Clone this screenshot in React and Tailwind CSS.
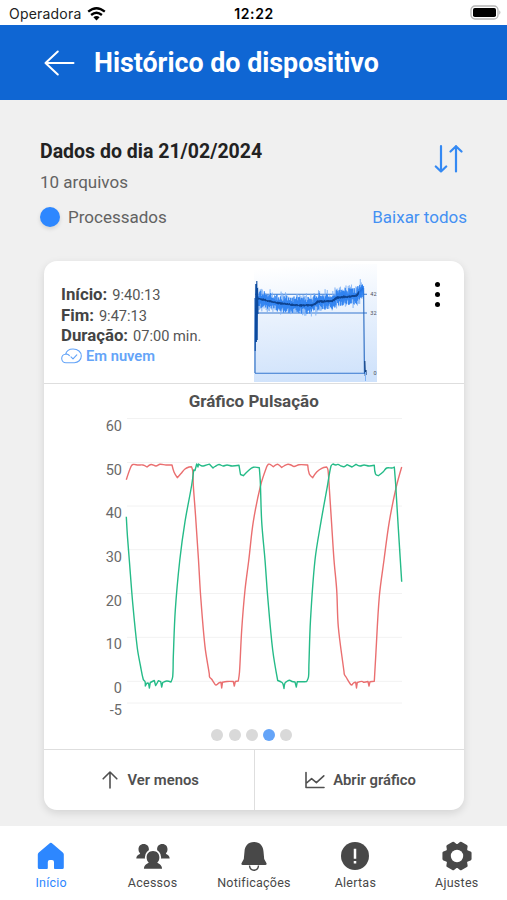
import React from "react";

const RED = "126.3 479.7 131 466.5 133 464.5 138 465 143 465 147 467 151 464.5 156 466 160 464.2 166 465 172 465 174 472 177.3 477.7 181 473.5 185 469 189 467 191.5 466.7 192.8 471 193.3 485 195.5 515 198.5 560 200.7 596.7 205 646.7 209.3 674 209.6 677 211.5 679 215 684.3 216 685 217.5 684.2 219 682.8 221 682.3 221.7 688 222.5 682.3 227 681.5 233.3 681.5 234.3 686 235.3 681.5 238.3 681 239.5 672 241.7 630 245 590 248.8 560 253.3 521.7 260.7 485 266.7 466.7 268.3 464.3 270 464.3 273.3 466.7 277 464.3 279 465 281.7 467.5 284 466 288 464.2 291 465 294 466.5 299 464.7 307.7 465 309.3 474 312.7 477.7 316.7 472 321.7 468.3 326.7 467 328 470 329.3 488 331.7 525 334 560 336.7 590 338.3 626.7 344 671.7 344.4 674.5 346 677 350.7 684.5 352 685 353.5 683 355.7 682.3 356.5 688 357.3 682.5 362 681.4 364 682.3 368 681.5 369 686 370 681.7 374.3 681.3 375.7 656.7 379.3 596.7 384 560 389.3 521.7 396 488 401.7 467";
const GREEN = "126.3 516.7 127.5 537 129.3 560 132.7 603 137.3 648 140.5 666 143.3 679.5 145 681.5 145.3 686 147 683 148.5 683.2 149.4 688 150.3 682.5 154.3 680.5 155.6 685.5 156.6 684 158.3 680.7 160.7 681.7 161.7 687 162.7 682.5 166.7 681 171 682 172.7 676.7 173.3 656.7 175.3 610 179.8 560 185 521.7 191.7 485 193.7 470 195 470.5 196.7 464 198 467 198.5 464 202 466 205 465.5 209.5 464.2 213 468 215 466.5 219 464.5 223 466 227 465 232 466 239 465.3 240.5 474.5 243.3 475.7 248.3 470.7 253.3 467.3 259.3 467.7 260.3 481.7 261.7 521.7 265 560 267.7 596.7 272.7 650 277.7 680.5 282 682.5 283 684 284 688.5 285 683 287.5 681 289.5 680.2 292 681.5 295 682 296.3 687 297.3 681.7 303 681.7 306.7 681.5 308.5 677 308.9 665 310.5 620 315 560 321 521.7 327.3 486.7 331 466 333 464 336 465 338 464.4 341 466 344 466.7 347 464.7 352 467 356 464.3 360 466 364 465 369 466 374.3 465.3 375.5 474 378.3 475.7 383.3 471.7 386.7 468 392 468 394.3 467 395.7 485 398.3 528 401.7 581.7";

/* Joins the points with cubic curves; a sharp turn keeps its corner. */
function curve(text) {
  const n = text.split(" ").map(Number);
  const p = [];
  for (let i = 0; i < n.length; i += 2) p.push([n[i], n[i + 1]]);
  const len = (a, b) => Math.hypot(b[0] - a[0], b[1] - a[1]);
  const tangent = p.map((c, i) => {
    if (i === 0 || i === p.length - 1) return [0, 0];
    const a = p[i - 1];
    const b = p[i + 1];
    const cos = ((c[0] - a[0]) * (b[0] - c[0]) + (c[1] - a[1]) * (b[1] - c[1])) / (len(a, c) * len(c, b));
    if (cos < 0.6) return [0, 0];
    const l = len(a, b);
    return [(b[0] - a[0]) / l, (b[1] - a[1]) / l];
  });
  let d = `M${p[0][0]} ${p[0][1]}`;
  for (let i = 1; i < p.length; i++) {
    const a = p[i - 1];
    const b = p[i];
    const k = len(a, b) / 3;
    const s = tangent[i - 1];
    const e = tangent[i];
    d += `C${(a[0] + s[0] * k).toFixed(2)} ${(a[1] + s[1] * k).toFixed(2)} ${(b[0] - e[0] * k).toFixed(2)} ${(b[1] - e[1] * k).toFixed(2)} ${b[0]} ${b[1]}`;
  }
  return d;
}

const TICKS = [
  ["60", 418.5], ["50", 462.5], ["40", 506], ["30", 549.7],
  ["20", 593.5], ["10", 637.3], ["0", 681.3], ["-5", 703],
];

function PulseChart() {
  return (
    <svg className="block h-[304px] w-[310px]" viewBox="100 414 310 304" fill="none">
      {TICKS.map(([label, y]) => (
        <g key={label}>
          <path d={`M127 ${y}H402`} stroke="#f2f2f2" strokeWidth="1" />
          <text x="122" y={y + 12} textAnchor="end" fill="#6a6a6a" fontSize="14.5" fontFamily="Roboto, sans-serif">{label}</text>
        </g>
      ))}
      <path d={curve(RED)} stroke="#ea6f70" strokeWidth="1.4" strokeLinejoin="round" />
      <path d={curve(GREEN)} stroke="#25bb88" strokeWidth="1.4" strokeLinejoin="round" />
    </svg>
  );
}

/* Average pressure level along the thumbnail, in its own pixels. */
const LEVELS = [[2, 33.5], [6, 35], [26, 39.5], [46, 41.5], [59, 41], [64, 37.5], [78, 37], [83, 33.5], [102, 32], [106, 27], [112, 22]];
function level(x) {
  for (let i = 1; i < LEVELS.length; i++) {
    const [x0, y0] = LEVELS[i - 1];
    const [x1, y1] = LEVELS[i];
    if (x <= x1) return y0 + ((x - x0) / (x1 - x0)) * (y1 - y0);
  }
  return 22;
}
function noise(i) {
  const v = Math.sin(i * 127.1 + 11.7) * 43758.5453;
  return v - Math.floor(v);
}
function band(step, amp, seed) {
  let d = "";
  let i = seed;
  for (let x = 4; x < 109; x += step) {
    i += 2;
    const up = level(x) - amp * (0.3 + noise(i) * 0.8);
    const down = level(x) + amp * (0.3 + noise(i + 1) * 0.8);
    d += `${d ? "L" : "M"}${x.toFixed(1)} ${up.toFixed(1)}L${(x + step / 2).toFixed(1)} ${down.toFixed(1)}`;
  }
  return d;
}

function Thumbnail() {
  return (
    <svg className="block h-[118px] w-[123px]" viewBox="0 0 123 118" fill="none">
      <defs>
        <linearGradient id="sky" x1="0.4" y1="0" x2="0.5" y2="1">
          <stop offset="0" stopColor="#ffffff" />
          <stop offset="0.45" stopColor="#e8f1fd" />
          <stop offset="1" stopColor="#cfe2fb" />
        </linearGradient>
      </defs>
      <rect width="123" height="118" fill="url(#sky)" />
      <path d="M1 30.3H113M1 49H113M1 109.2H112" stroke="#3577cf" strokeWidth="1.1" />
      <path d={band(1.1, 11, 5)} stroke="#7fb2f5" strokeWidth="0.6" />
      <path d={band(0.9, 8, 301)} stroke="#2a7ff0" strokeWidth="0.75" />
      <path d={band(0.9, 1.2, 700)} stroke="#0e438f" strokeWidth="1" />
      <path d="M1 109V34M109.6 24L110.4 109" stroke="#2467c0" strokeWidth="1.1" />
      <path d="M1.2 87L1.8 20L2.4 78L2.8 17L3.2 76L3.5 24L4 50" stroke="#0c4a9e" strokeWidth="1.1" />
      <path d="M105 35L106 24L107 33L108 21L109 33L109.6 22" stroke="#2a7ff0" strokeWidth="0.9" />
      <path d="M110.8 97L111.3 112L112 106V111" stroke="#123f7e" strokeWidth="1.2" />
      <path d="M111.5 108V117" stroke="#7fb2f5" strokeWidth="1" />
      <g fill="#4b4f58" fontSize="5.5" fontFamily="Roboto, sans-serif" textAnchor="end">
        <text x="122.5" y="32.3">42</text>
        <text x="122.5" y="51">32</text>
        <text x="122.5" y="111.2">0</text>
      </g>
    </svg>
  );
}

function StatusBar() {
  return (
    <div className="flex h-[25px] items-center bg-white px-[9px] font-['Inter',sans-serif] text-[14px] text-[#222]">
      <div className="flex flex-1 items-center gap-[6px] pt-[2px]">
        <span className="tracking-[0.2px]">Operadora</span>
        <svg className="h-[14px] w-[19px]" viewBox="0 0 19 14" fill="none" stroke="#000" strokeWidth="2.3">
          <path d="M1.2 4.7Q9.5 -2.3 17.8 4.7" />
          <path d="M4.1 8Q9.5 3.4 14.9 8" />
          <path d="M9.5 13.4L6.4 10.2Q9.5 7.8 12.6 10.2Z" fill="#000" stroke="none" />
        </svg>
      </div>
      <span className="pl-[1px] pt-[2px] font-semibold tracking-[0.6px] text-black">12:22</span>
      <div className="flex flex-1 justify-end">
        <svg className="mr-[-4px] h-[15px] w-[32px]" viewBox="0 0 32 15">
          <rect x="1" y="1" width="27" height="13" rx="4" fill="#fff" stroke="#b5b5b5" strokeWidth="1.3" />
          <rect x="3" y="3" width="23" height="9" rx="1.8" fill="#000" />
          <path d="M29.4 5.3Q31.4 7.5 29.4 9.7Z" fill="#aaa" />
        </svg>
      </div>
    </div>
  );
}

function Header() {
  return (
    <header className="flex h-[75px] items-center bg-[#0f66d3] pl-[44px] text-white">
      <svg className="h-[26px] w-[31px]" viewBox="0 0 31 26" fill="none" stroke="#fff" strokeWidth="2" strokeLinecap="round" strokeLinejoin="round">
        <path d="M29.5 13H1.5M13.8 1.5L1.5 13L13.8 24.5" />
      </svg>
      <h1 className="ml-[19px] whitespace-nowrap pt-[2px] text-[26.8px] font-bold leading-none">Histórico do dispositivo</h1>
    </header>
  );
}

function Detail({ label, value }) {
  return (
    <p className="flex h-[20.4px] items-baseline gap-[5px] whitespace-nowrap text-[14.6px] leading-[20.4px] text-[#555]">
      <b className="text-[16.8px] font-bold text-[#444]">{label}</b>
      <span>{value}</span>
    </p>
  );
}

function FileCard() {
  return (
    <section className="mt-[34px] ml-[3.5px] flex h-[549px] w-[420.5px] flex-col overflow-hidden rounded-[13px] bg-white shadow-[0_3px_8px_rgba(0,0,0,0.12)]">
      <div className="flex h-[122.5px] shrink-0 border-b-[1.5px] border-[#dedede]">
        <div className="w-[210px] pl-[17.5px] pt-[23.2px]">
          <Detail label="Início:" value="9:40:13" />
          <Detail label="Fim:" value="9:47:13" />
          <Detail label="Duração:" value="07:00 min." />
          <p className="flex h-[21px] items-center gap-[4px] pt-[1px] text-[14.7px] font-semibold text-[#64a4f8]">
            <svg className="h-[16px] w-[21px]" viewBox="0 0 21 16" fill="none" stroke="#64a4f8" strokeWidth="1.1" strokeLinecap="round" strokeLinejoin="round">
              <path d="M5 14.7C2.6 14.7 .7 12.9 .7 10.5C.7 8.2 2.4 6.4 4.6 6.2C5.4 3 8.3 1 12 1C17 1 20.3 4 20.3 7.9C20.3 11.8 17.2 14.7 13.3 14.7ZM4.6 6.2C6 5.9 7.6 6.5 8.4 7.6" />
              <path d="M10 8.8L12 10.8L15.8 6.8" />
            </svg>
            Em nuvem
          </p>
        </div>
        <div className="pt-[3px]"><Thumbnail /></div>
        <div className="ml-[58px] mt-[21px] flex h-[25px] flex-col justify-between">
          <i className="size-[5px] rounded-full bg-black" />
          <i className="size-[5px] rounded-full bg-black" />
          <i className="size-[5px] rounded-full bg-black" />
        </div>
      </div>
      <div className="flex h-[365.5px] shrink-0 flex-col">
        <h3 className="mb-[2px] mt-[6px] h-[22px] text-center text-[17px] font-bold leading-[22px] text-[#505050]">Gráfico Pulsação</h3>
        <div className="ml-[56.5px]"><PulseChart /></div>
        <div className="mt-[11.5px] flex justify-center gap-[5.2px] pr-[4px]">
          <i className="size-[12px] rounded-full bg-[#d9d9d9]" />
          <i className="size-[12px] rounded-full bg-[#d9d9d9]" />
          <i className="size-[12px] rounded-full bg-[#d9d9d9]" />
          <i className="size-[12px] rounded-full bg-[#64a4f8]" />
          <i className="size-[12px] rounded-full bg-[#d9d9d9]" />
        </div>
      </div>
      <div className="flex min-h-0 flex-1 border-t-[1.5px] border-[#dedede] text-[14.8px] font-semibold text-[#505050]">
        <button className="flex w-[211.5px] items-center justify-center gap-[10px] border-r-[1.5px] border-[#dedede] pl-[3px]">
          <svg className="h-[18px] w-[16px]" viewBox="0 0 16 18" fill="none" stroke="#505050" strokeWidth="1.6" strokeLinecap="round" strokeLinejoin="round">
            <path d="M8 17V1M1.2 7.8L8 1L14.8 7.8" />
          </svg>
          Ver menos
        </button>
        <button className="flex flex-1 items-center justify-center gap-[8px] pl-[2px]">
          <svg className="h-[18px] w-[20px]" viewBox="0 0 20 18" fill="none" stroke="#505050" strokeWidth="1.6" strokeLinecap="round" strokeLinejoin="round">
            <path d="M1 1.5V16.5H19M1 12.5L6.6 7.7L11.4 11.6L18.8 4.8" />
          </svg>
          Abrir gráfico
        </button>
      </div>
    </section>
  );
}

function Person({ x, y, s }) {
  return (
    <g transform={`translate(${x} ${y}) scale(${s})`}>
      <path d="M0 0C4 0 6.2 2.8 6.2 6.3C6.2 8.6 5.4 10 4.2 11.2C4.6 12.5 8.6 12.6 8.8 17.2H-8.8C-8.6 12.6 -4.6 12.5 -4.2 11.2C-5.4 10 -6.2 8.6 -6.2 6.3C-6.2 2.8 -4 0 0 0Z" />
    </g>
  );
}

/* Six rounded lobes with a notch between each pair. */
function gear() {
  const at = (deg, r) => {
    const a = (deg * Math.PI) / 180;
    return `${(16.5 + r * Math.cos(a)).toFixed(2)} ${(14 + r * Math.sin(a)).toFixed(2)}`;
  };
  const pts = [];
  for (let a = 0; a < 360; a += 60) {
    pts.push(at(a - 13, 13.4), at(a + 13, 13.4), at(a + 24, 10.6), at(a + 36, 10.6));
  }
  return `M${pts.join("L")}Z`;
}

const NAV = [
  ["Início", (
    <path d="M15.5 1Q16.3 .3 17.2 1L28.3 10.5Q29.3 11.4 29.3 12.6V25.5Q29.3 27 27.8 27H20.3Q19.5 27 19.5 26V20Q19.5 18 17.5 18H15.3Q13.3 18 13.3 20V26Q13.3 27 12.5 27H4.8Q3.3 27 3.3 25.5V12.6Q3.3 11.4 4.3 10.5Z" />
  )],
  ["Acessos", (
    <>
      <Person x={7.2} y={2} s={0.84} />
      <Person x={25.8} y={2} s={0.84} />
      <g stroke="#fff" strokeWidth="3.4"><Person x={16.5} y={9} s={1.03} /></g>
      <Person x={16.5} y={9} s={1.03} />
    </>
  )],
  ["Notificações", (
    <>
      <path d="M16.5 0C22.6 0 25.7 4.2 26 9.5L26.7 17L29 21.3Q29.4 22.9 27.8 22.9H5.2Q3.6 22.9 4 21.3L6.3 17L7 9.5C7.3 4.2 10.4 0 16.5 0Z" />
      <path d="M12 23.5C12.5 29.8 20.5 29.8 21 23.5" fill="none" stroke="#484848" strokeWidth="1.4" />
    </>
  )],
  ["Alertas", (
    <>
      <circle cx="16.5" cy="14" r="14" />
      <path d="M16.5 6.8V16.8M16.5 19V21.4" stroke="#fff" strokeWidth="2.5" />
    </>
  )],
  ["Ajustes", (
    <>
      <path d={gear()} stroke="#484848" strokeWidth="3" strokeLinejoin="round" />
      <circle cx="16.5" cy="14" r="6.2" fill="#fff" />
    </>
  )],
];

function BottomNav() {
  return (
    <nav className="grid h-[74px] grid-cols-5 bg-white">
      {NAV.map(([label, icon], i) => (
        <div key={label} className={`flex flex-col items-center pl-[1px] pt-[16px] ${i === 0 ? "text-[#2d87ff]" : "text-[#484848]"}`}>
          <svg className="h-[30px] w-[34px] overflow-visible" viewBox="-0.5 0 34 30" fill="currentColor">{icon}</svg>
          <span className="mt-[2px] text-[12.5px] leading-[18px] tracking-[0.25px]">{label}</span>
        </div>
      ))}
    </nav>
  );
}

export default function App() {
  return (
    <div className="flex h-[900px] w-[507px] flex-col overflow-hidden bg-[#f0f0f0] font-['Roboto',sans-serif]">
      <StatusBar />
      <Header />
      <main className="h-[726px] px-[40px] pt-[38px]">
        <div className="flex justify-between">
          <div>
            <h2 className="h-[26px] whitespace-nowrap pt-[1px] text-[19.5px] font-bold leading-[26px] text-[#222]">Dados do dia 21/02/2024</h2>
            <p className="mt-[8px] h-[20px] text-[17px] leading-[20px] text-[#626262]">10 arquivos</p>
          </div>
          <svg className="mr-[4px] mt-[7px] h-[28px] w-[29px]" viewBox="0 0 29 28" fill="none" stroke="#3489f3" strokeWidth="2.2" strokeLinecap="round" strokeLinejoin="round">
            <path d="M7 1.2V26.5M1.8 21.5L7 26.5L12.2 21.5M22 26.5V1.2M16.5 6.5L22 1.2L27.5 6.5" />
          </svg>
        </div>
        <div className="mt-[15px] flex h-[20px] items-center justify-between text-[17px] leading-[20px]">
          <div className="flex items-center gap-[8px] text-[#626262]">
            <i className="size-[20px] rounded-full bg-[#2d87ff] shadow-[0_2px_4px_rgba(0,0,0,0.12)]" />
            Processados
          </div>
          <span className="text-[#4490f3]">Baixar todos</span>
        </div>
        <FileCard />
      </main>
      <BottomNav />
    </div>
  );
}
